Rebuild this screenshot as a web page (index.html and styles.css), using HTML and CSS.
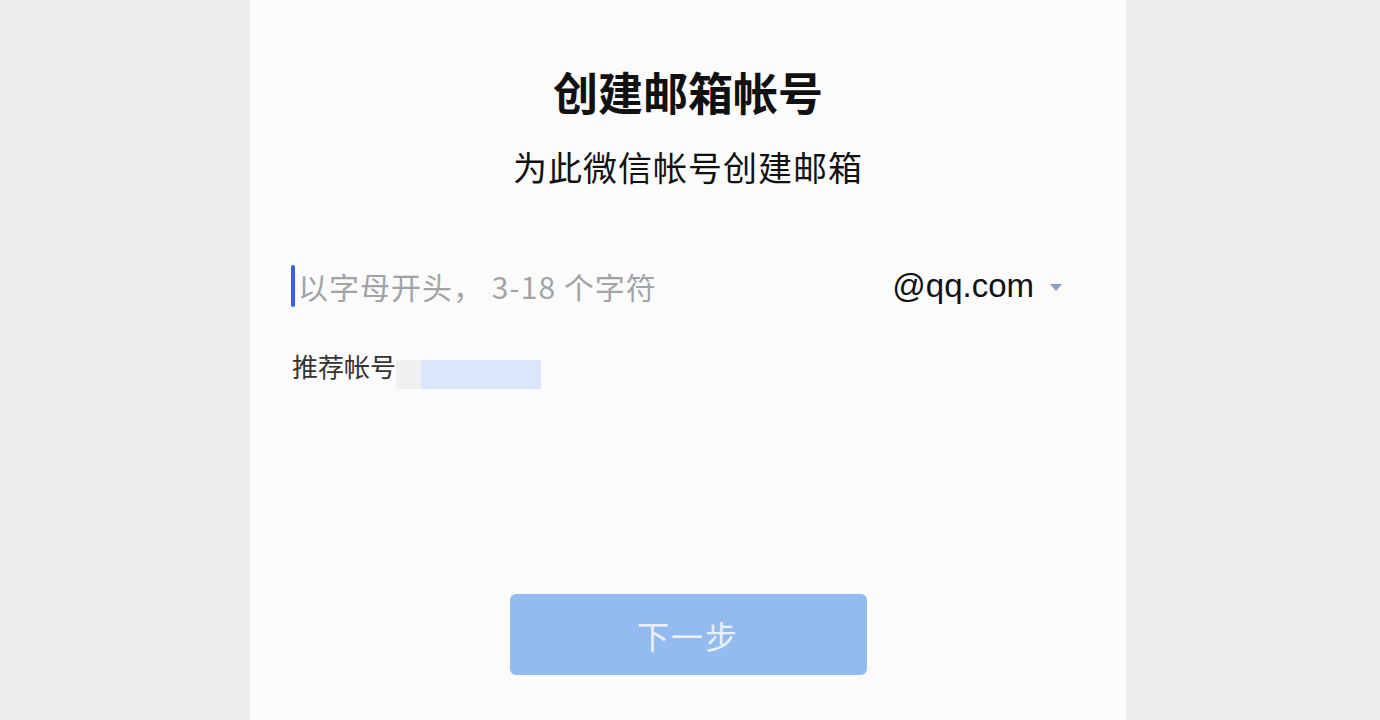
FILE: index.html
```html
<!DOCTYPE html>
<html lang="zh">
<head>
<meta charset="utf-8">
<link rel="stylesheet" href="styles.css">
</head>
<body>
<div class="page">
  <main class="panel">
    <h1 class="title">创建邮箱帐号</h1>
    <p class="subtitle">为此微信帐号创建邮箱</p>
    <div class="field">
      <span class="caret"></span>
      <span class="placeholder">以字母开头， 3-18 个字符</span>
      <span class="domain">@qq.com</span>
      <span class="arrow"></span>
    </div>
    <div class="suggest">
      <span class="suggest-label">推荐帐号</span>
      <span class="blur-gray"></span>
      <span class="blur-blue"></span>
    </div>
    <div class="spacer"></div>
    <button class="next">下一步</button>
  </main>
</div>
</body>
</html>
```

FILE: styles.css
```css
html, body {
  margin: 0;
  padding: 0;
  height: 100%;
}
body {
  background: #eeeeee;
  font-family: "Noto Sans CJK SC", "Noto Sans", sans-serif;
}
.page {
  display: flex;
  justify-content: center;
  height: 720px;
  overflow: hidden;
}
.panel {
  width: 876px;
  margin-left: -4px;
  background: #fbfbfc;
  display: flex;
  flex-direction: column;
  align-items: center;
  box-sizing: border-box;
  padding-top: 60px;
}
.title {
  margin: 0;
  font-size: 45px;
  line-height: 64px;
  font-weight: 700;
  color: #111;
}
.subtitle {
  margin: 18px 0 0;
  font-size: 34px;
  line-height: 50px;
  color: #111;
  letter-spacing: 1px;
}
.field {
  margin: 72px 64px 0 41px;
  align-self: stretch;
  height: 44px;
  display: flex;
  align-items: center;
}
.caret {
  width: 4px;
  height: 42px;
  background: #3d5fd6;
  border-radius: 2px;
  margin-right: 3px;
}
.placeholder {
  font-size: 30px;
  letter-spacing: 1px;
  color: #a3a3a5;
  flex: 1;
  white-space: pre;
}
.domain {
  font-family: "Liberation Sans", "Noto Sans", sans-serif;
  font-size: 33px;
  color: #111;
  margin-right: 16px;
}
.arrow {
  width: 0;
  height: 0;
  border-left: 6px solid transparent;
  border-right: 6px solid transparent;
  border-top: 7px solid #8c9dc0;
  margin-top: 2px;
}
.suggest {
  margin: 43px 64px 0 42px;
  align-self: stretch;
  display: flex;
  align-items: flex-start;
  height: 30px;
}
.suggest-label {
  font-size: 26px;
  line-height: 30px;
  color: #333;
}
.blur-gray {
  width: 25px;
  height: 29px;
  background: #f0f0f1;
  margin-top: 9px;
}
.blur-blue {
  width: 120px;
  height: 29px;
  background: #d9e6fb;
  margin-top: 9px;
}
.spacer {
  height: 213px;
}
.next {
  width: 357px;
  height: 81px;
  border: none;
  border-radius: 6px;
  background: #93bbef;
  color: #eaf1fc;
  font-family: "Noto Sans CJK SC", "Noto Sans", sans-serif;
  font-size: 32px;
  letter-spacing: 2px;
  padding: 0;
}
```
